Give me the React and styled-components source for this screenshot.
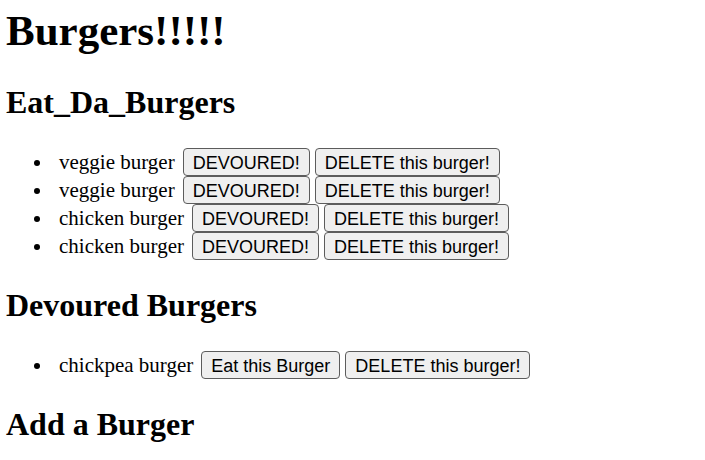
import React from "react";
import styled, { createGlobalStyle } from "styled-components";

const GlobalStyle = createGlobalStyle`
  * { box-sizing: border-box; }
  body {
    margin: 0;
    background: #fff;
    color: #000;
    font-family: "Liberation Serif", "Times New Roman", serif;
    font-size: 21px;
    line-height: 28px;
  }
`;

const Page = styled.main`
  padding: 4px 6px 0;
`;

const Title = styled.h1`
  margin: 0;
  font-size: 43px;
  line-height: 53px;
`;

const Heading = styled.h2`
  margin: 0;
  font-size: 32px;
  line-height: 36px;
`;

const Section = styled.section`
  margin-top: 27px;
`;

const List = styled.ul`
  margin: 28px 0 0;
  padding: 0 0 0 47px;
`;

const Item = styled.li`
  padding-left: 6px;
`;

const Row = styled.div`
  display: flex;
  align-items: center;
  gap: 5px;
`;

const Name = styled.span`
  padding-right: 3px;
`;

const Button = styled.button`
  height: 28px;
  padding: 1px 9px 0;
  border: 1px solid #5c5c5c;
  border-radius: 4px;
  background: #efefef;
  color: #000;
  font-family: "Liberation Sans", Arial, sans-serif;
  font-size: 18px;
  line-height: 24px;
  white-space: nowrap;
`;

const waiting = [
  { id: 1, name: "veggie burger" },
  { id: 2, name: "veggie burger" },
  { id: 3, name: "chicken burger" },
  { id: 4, name: "chicken burger" },
];

const devoured = [{ id: 5, name: "chickpea burger" }];

function BurgerList({ burgers, action }) {
  return (
    <List>
      {burgers.map((burger) => (
        <Item key={burger.id}>
          <Row>
            <Name>{burger.name}</Name>
            <Button type="button">{action}</Button>
            <Button type="button">DELETE this burger!</Button>
          </Row>
        </Item>
      ))}
    </List>
  );
}

export default function App() {
  return (
    <Page>
      <GlobalStyle />
      <Title>Burgers!!!!!</Title>
      <Section>
        <Heading>Eat_Da_Burgers</Heading>
        <BurgerList burgers={waiting} action="DEVOURED!" />
      </Section>
      <Section>
        <Heading>Devoured Burgers</Heading>
        <BurgerList burgers={devoured} action="Eat this Burger" />
      </Section>
      <Section>
        <Heading>Add a Burger</Heading>
      </Section>
    </Page>
  );
}
